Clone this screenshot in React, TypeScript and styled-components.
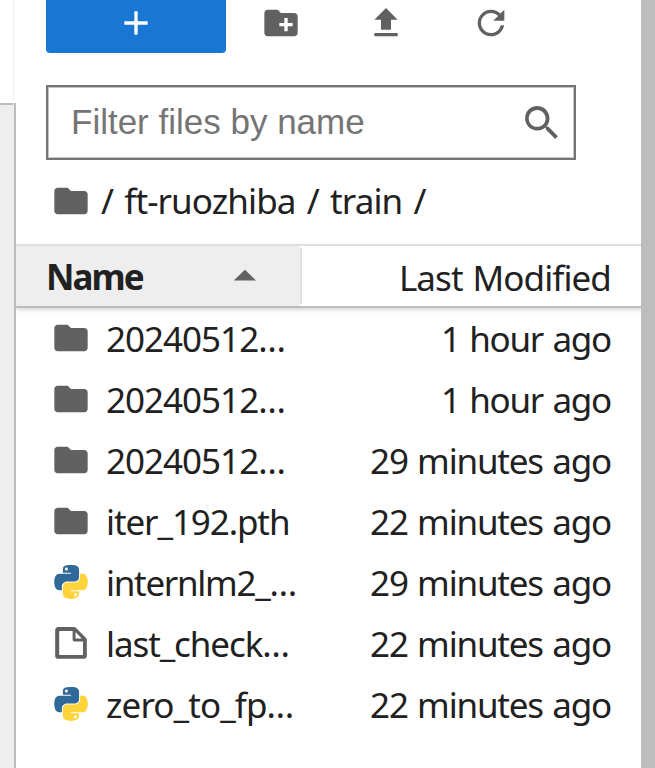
import React from "react";
import styled, { createGlobalStyle } from "styled-components";

const Global = createGlobalStyle`
  * { box-sizing: border-box; }
  html, body { margin: 0; padding: 0; overflow: hidden; background: #fff; }
`;

const Page = styled.div`
  display: flex;
  width: 655px;
  height: 768px;
  overflow: hidden;
  background: #fff;
  color: #212121;
  font-family: "Noto Sans", "Open Sans", sans-serif;
  font-size: 35px;
`;

const Rail = styled.div`
  display: flex;
  flex-direction: column;
  flex: 0 0 16px;
`;
const RailTop = styled.div`
  width: 14px;
  height: 101px;
  border-right: 1px solid #eee;
`;
const RailBody = styled.div`
  flex: 1;
  margin-top: 2px;
  background: #eee;
  border-right: 2px solid #bdbdbd;
`;
const RailEdge = styled.div`
  width: 13px;
  height: 2px;
  background: #bdbdbd;
`;

const Browser = styled.main`
  display: flex;
  flex-direction: column;
  flex: 1;
  min-width: 0;
  overflow: hidden;
`;

const Splitter = styled.div`
  flex: 0 0 14px;
  background: #bdbdbd;
`;

const Toolbar = styled.div`
  display: flex;
  height: 53px;
  padding-left: 30px;
`;
const NewButton = styled.button`
  display: flex;
  justify-content: center;
  width: 180px;
  height: 53px;
  padding: 3px 0 0;
  border: 0;
  border-radius: 0 0 4px 4px;
  background: #1976d2;
`;
const ToolButton = styled.button<{ $width: number }>`
  display: flex;
  justify-content: center;
  width: ${(p) => p.$width}px;
  padding: 3px 0 0;
  border: 0;
  background: none;
`;

const Icon = styled.svg<{ $size?: number; $color?: string }>`
  display: block;
  flex: none;
  width: ${(p) => p.$size ?? 40}px;
  height: ${(p) => p.$size ?? 40}px;
  fill: ${(p) => p.$color ?? "#616161"};
`;

const Filter = styled.label`
  display: flex;
  align-items: center;
  justify-content: space-between;
  width: 530px;
  height: 75px;
  margin: 32px 0 0 30px;
  padding: 0 12px 1px 23px;
  border: 2px solid #757575;
  box-shadow: inset 0 0 0 1px #c4c4c4;
`;
const FilterInput = styled.input`
  width: 400px;
  padding: 0 0 1px;
  border: 0;
  outline: 0;
  background: none;
  font: 35px "Liberation Sans", Arial, sans-serif;
  &::placeholder { color: #757575; opacity: 1; }
`;

const Crumbs = styled.nav`
  display: flex;
  align-items: center;
  height: 84px;
  padding: 0 0 3px 35px;
  line-height: 48px;
`;
const Text = styled.span<{ $spacing: number }>`
  white-space: pre;
  letter-spacing: ${(p) => p.$spacing}px;
  word-spacing: 1.5px;
`;
const CrumbText = styled(Text)`
  margin-left: 10px;
  word-spacing: 3px;
`;

const Header = styled.div`
  display: flex;
  flex: 0 0 64px;
  border-top: 2px solid #e0e0e0;
  border-bottom: 2px solid #bdbdbd;
  box-shadow: 0 2px 4px rgba(0, 0, 0, 0.16);
`;
const NameHead = styled.div`
  display: flex;
  align-items: center;
  justify-content: space-between;
  width: 284px;
  padding: 0 29px 0 30px;
  background: #eee;
  font-weight: 700;
`;
const ModifiedHead = styled.div`
  display: flex;
  flex: 1;
  align-items: center;
  justify-content: flex-end;
  margin: 2px 0;
  padding: 3px 30px 0 0;
  border-left: 2px solid #e0e0e0;
`;

const List = styled.ul`
  margin: 0;
  padding: 0;
  list-style: none;
`;
const Row = styled.li`
  display: flex;
  align-items: center;
  height: 61px;
  padding: 0 30px 1px 35px;
`;
const RowIcon = styled.div`
  width: 55px;
`;
const Modified = styled(Text)`
  margin-left: auto;
`;

type Kind = "folder" | "python" | "file";

const Folder = () => (
  <Icon viewBox="0 0 24 24">
    <path d="M10 4H4c-1.1 0-1.99.9-1.99 2L2 18c0 1.1.9 2 2 2h16c1.1 0 2-.9 2-2V8c0-1.1-.9-2-2-2h-8l-2-2z" />
  </Icon>
);
const Python = () => (
  <Icon viewBox="-10 -10 131.161 132.389">
    <path fill="#306998" d="M54.918785 .00092C50.335132.02221727 45.957846.41313697 42.106285 1.0946693 30.760069 3.0991731 28.700036 7.2947714 28.700035 15.032169v10.21875h26.8125v3.40625h-26.8125-10.0625c-7.792459 0-14.6157588 4.683717-16.7499998 13.59375-2.46181998 10.212966-2.57101508 16.586023 0 27.25 1.9059283 7.937852 6.4575432 13.593748 14.2499998 13.59375h9.21875v-12.25c0-8.849902 7.657144-16.656248 16.75-16.65625h26.78125c7.454951 0 13.406253-6.138164 13.40625-13.625v-25.53125c0-7.2663386-6.12998-12.7247771-13.40625-13.9374997C64.281548.32794397 59.502438-.02037903 54.918785.00092Zm-14.5 8.21875c2.769547 0 5.03125 2.2986456 5.03125 5.125 0 2.816336-2.261703 5.09375-5.03125 5.09375-2.779476 0-5.03125-2.277415-5.03125-5.09375 0-2.826353 2.251774-5.125 5.03125-5.125z" />
    <path fill="#ffd43b" d="M85.637535 28.657169v11.90625c0 9.230755-7.825895 17-16.75 17h-26.78125c-7.335833 0-13.406249 6.278483-13.40625 13.625v25.531247c0 7.266344 6.318588 11.540324 13.40625 13.625004 8.487331 2.49561 16.626237 2.94663 26.78125 0 6.750155-1.95439 13.406253-5.88761 13.40625-13.625004V86.500919h-26.78125v-3.40625h26.78125 13.406254c7.792461 0 10.696251-5.435408 13.406241-13.59375 2.79933-8.398886 2.68022-16.475776 0-27.25-1.92578-7.757441-5.60387-13.59375-13.406241-13.59375zm-15.0625 64.65625c2.779478 0 5.03125 2.277417 5.03125 5.093747 0 2.826354-2.251775 5.125004-5.03125 5.125004-2.76955 0-5.03125-2.29865-5.03125-5.125004 0-2.81633 2.261697-5.093747 5.03125-5.093747z" />
  </Icon>
);
const File = () => (
  <Icon viewBox="0 0 22 22">
    <path d="M19.3 8.2l-5.5-5.5c-.3-.3-.7-.5-1.2-.5H3.9c-.8.1-1.6.9-1.6 1.8v14.1c0 .9.7 1.6 1.6 1.6h14.2c.9 0 1.6-.7 1.6-1.6V9.4c.1-.5-.1-.9-.4-1.2zm-5.8-3.3l3.4 3.6h-3.4V4.9zm3.9 12.7H4.7c-.1 0-.2 0-.2-.2V4.7c0-.2.1-.3.2-.3h7.2v4.4s0 .8.3 1.1c.3.3 1.1.3 1.1.3h4.3v7.2s-.1.2-.2.2z" />
  </Icon>
);
const icons: Record<Kind, () => React.JSX.Element> = { folder: Folder, python: Python, file: File };

interface Entry {
  kind: Kind;
  name: string;
  spacing: number;
  modified: string;
  modSpacing: number;
}
const entries: Entry[] = [
  { kind: "folder", name: "20240512…", spacing: -1, modified: "1 hour ago", modSpacing: -1.25 },
  { kind: "folder", name: "20240512…", spacing: -1, modified: "1 hour ago", modSpacing: -1.25 },
  { kind: "folder", name: "20240512…", spacing: -1, modified: "29 minutes ago", modSpacing: -1.2 },
  { kind: "folder", name: "iter_192.pth", spacing: -1.1, modified: "22 minutes ago", modSpacing: -1.2 },
  { kind: "python", name: "internlm2_…", spacing: -1.3, modified: "29 minutes ago", modSpacing: -1.2 },
  { kind: "file", name: "last_check…", spacing: -1.1, modified: "22 minutes ago", modSpacing: -1.2 },
  { kind: "python", name: "zero_to_fp…", spacing: -0.9, modified: "22 minutes ago", modSpacing: -1.2 },
];

export default function App() {
  return (
    <>
      <Global />
      <Page>
        <Rail>
          <RailTop />
          <RailBody>
            <RailEdge />
          </RailBody>
        </Rail>
        <Browser>
          <Toolbar>
            <NewButton aria-label="New Launcher">
              <Icon viewBox="0 0 24 24" $color="#fff">
                <path d="M19 13h-6v6h-2v-6H5v-2h6V5h2v6h6v2z" />
              </Icon>
            </NewButton>
            <ToolButton $width={110} aria-label="New Folder">
              <Icon viewBox="0 0 24 24">
                <path d="M20 6h-8l-2-2H4c-1.11 0-1.99.89-1.99 2L2 18c0 1.11.89 2 2 2h16c1.11 0 2-.89 2-2V8c0-1.11-.89-2-2-2zm-1 8h-3v3h-2v-3h-3v-2h3V9h2v3h3v2z" />
              </Icon>
            </ToolButton>
            <ToolButton $width={100} aria-label="Upload Files">
              <Icon viewBox="0 0 24 24">
                <path d="M9 16h6v-6h4l-7-7-7 7h4zm-4 2h14v2H5z" />
              </Icon>
            </ToolButton>
            <ToolButton $width={110} aria-label="Refresh">
              <Icon viewBox="0 0 18 18">
                <path d="M9 13.5c-2.49 0-4.5-2.01-4.5-4.5S6.51 4.5 9 4.5c1.24 0 2.36.52 3.17 1.33L10 8h5V3l-1.76 1.76C12.15 3.68 10.66 3 9 3 5.69 3 3.01 5.69 3.01 9S5.69 15 9 15c2.97 0 5.43-2.16 5.9-5h-1.52c-.46 2-2.24 3.5-4.38 3.5z" />
              </Icon>
            </ToolButton>
          </Toolbar>
          <Filter>
            <FilterInput placeholder="Filter files by name" />
            <Icon viewBox="0 0 18 18" $size={41}>
              <path d="M12.1 10.9h-.7l-.2-.2c.8-.9 1.3-2.2 1.3-3.5 0-3-2.4-5.4-5.4-5.4S1.8 4.2 1.8 7.1s2.4 5.4 5.4 5.4c1.3 0 2.5-.5 3.5-1.3l.2.2v.7l4.1 4.1 1.2-1.2-4.1-4.1zM7.1 10.9c-2.1 0-3.7-1.7-3.7-3.7s1.7-3.7 3.7-3.7 3.7 1.7 3.7 3.7-1.6 3.7-3.7 3.7z" />
            </Icon>
          </Filter>
          <Crumbs>
            <Folder />
            <CrumbText $spacing={-0.9}>/ ft-ruozhiba / train /</CrumbText>
          </Crumbs>
          <Header>
            <NameHead>
              <Text $spacing={-1.9}>Name</Text>
              <Icon viewBox="0 0 18 18" $size={52}>
                <path d="M5.2 10.5L9 6.8l3.8 3.8H5.2z" />
              </Icon>
            </NameHead>
            <ModifiedHead>
              <Text $spacing={-0.9}>Last Modified</Text>
            </ModifiedHead>
          </Header>
          <List>
            {entries.map((entry, i) => {
              const EntryIcon = icons[entry.kind];
              return (
                <Row key={i}>
                  <RowIcon>
                    <EntryIcon />
                  </RowIcon>
                  <Text $spacing={entry.spacing}>{entry.name}</Text>
                  <Modified $spacing={entry.modSpacing}>{entry.modified}</Modified>
                </Row>
              );
            })}
          </List>
        </Browser>
        <Splitter />
      </Page>
    </>
  );
}
